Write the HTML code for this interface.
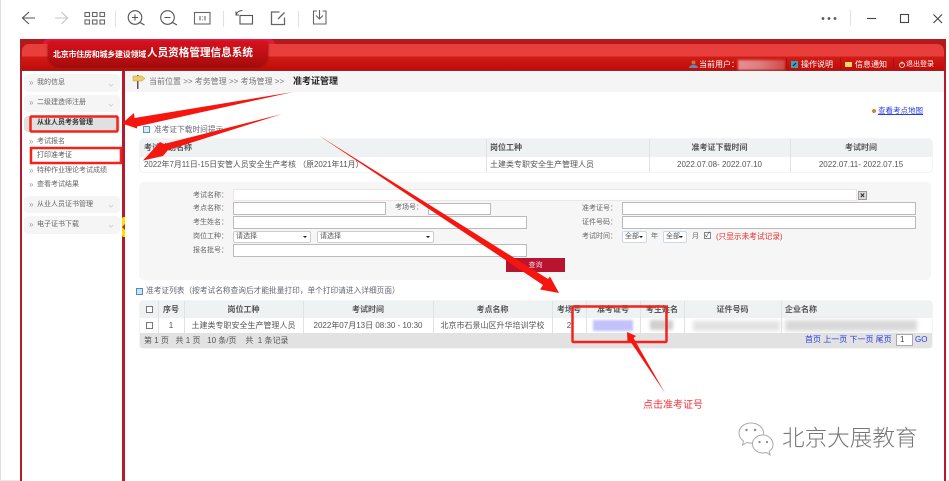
<!DOCTYPE html>
<html lang="zh-CN">
<head>
<meta charset="utf-8">
<title>准考证管理</title>
<style>
html,body{margin:0;padding:0;background:#fff}
body{width:949px;height:481px;position:relative;overflow:hidden;font-family:"Liberation Sans","Noto Sans CJK SC",sans-serif;color:#555}
.a{position:absolute}
.t{position:absolute;white-space:nowrap;font-size:8px;line-height:10px;color:#666;filter:blur(.25px)}
.s7{font-size:7px}
.side{position:absolute;left:24px;width:96px;background:#f5f5f5;border-radius:4px}
.inp{position:absolute;background:#fff;border:1px solid #bbb;box-sizing:border-box}
.sel{position:absolute;background:#fff;border:1px solid #ccc;border-radius:2px;box-sizing:border-box;font-size:7px;line-height:10px;color:#555;padding-left:2px}
.sel:after{content:"";position:absolute;right:3px;top:4px;border:2px solid transparent;border-top:2.5px solid #222}
.vl{position:absolute;width:1px;background:#dfe3e4}
.c{text-align:center}
.b{font-weight:bold;color:#555}
</style>
</head>
<body>
<!-- window strips -->
<div class="a" style="left:0;top:0;width:1px;height:481px;background:#dcdcdc"></div>
<div class="a" style="left:0;top:480px;width:949px;height:1px;background:#e8e8e8"></div>

<!-- toolbar -->
<svg class="a" style="left:0;top:0" width="949" height="36" viewBox="0 0 949 36" fill="none" stroke="#555" stroke-width="1.1">
<path d="M35 18H23M29 12l-6.500 6 6.500 6"/>
<path d="M55 18h12M61.500 12l6 6-6 6" stroke="#c4c4c4"/>
<g stroke="#666"><rect x="85" y="12.500" width="4.500" height="4"/><rect x="92.500" y="12.500" width="4.500" height="4"/><rect x="100" y="12.500" width="4.500" height="4"/><rect x="85" y="20" width="4.500" height="4"/><rect x="92.500" y="20" width="4.500" height="4"/><rect x="100" y="20" width="4.500" height="4"/></g>
<path d="M115.500 11v16M223.500 11v16M298.500 11v16M850.500 10v16" stroke="#e2e2e2"/>
<circle cx="135" cy="17.500" r="6.800"/><path d="M140 22.500l4.500 2.500M132 17.500h6M135 14.500v6"/>
<circle cx="167.500" cy="17.500" r="6.800"/><path d="M172.500 22.500l4.500 2.500M164.500 17.500h6"/>
<rect x="194.500" y="12.500" width="15.500" height="11.500" stroke="#666"/><path d="M200 16v4.500M205 16v4.500M202.500 16.500v.8M202.500 19.500v.8" stroke="#666"/>
<rect x="240" y="15.500" width="12.500" height="8.500" stroke="#555"/><path d="M236 15c1-3 3-4.500 6.500-4.500M236 11.500v3.500h3"/>
<path d="M284.500 17.500v7h-13v-12.500h8M278 19l6.500-6.500" stroke="#666" stroke-width="1.300"/>
<path d="M317 11h-3.500v13h12.500v-13h-3.500M319.500 10v9M316 15.500l3.500 3.500 3.500-3.500" stroke="#666"/>
<g fill="#555" stroke="none"><circle cx="823" cy="18.500" r="1.400"/><circle cx="829" cy="18.500" r="1.400"/><circle cx="835" cy="18.500" r="1.400"/></g>
<path d="M867 18.500h9" stroke="#444"/>
<rect x="900.500" y="14.500" width="8" height="8" stroke="#444"/>
<path d="M933.500 14.500l8.500 8.500M942 14.500l-8.500 8.500" stroke="#444"/>
</svg>

<!-- frame -->
<div class="a" style="left:20px;top:39px;width:926px;height:442px;background:#fff"></div>
<div class="a" style="left:20px;top:39px;width:2px;height:442px;background:#b51b2c"></div>
<div class="a" style="left:944px;top:39px;width:2px;height:442px;background:#b51b2c"></div>
<div class="a" style="left:122px;top:71px;width:3px;height:410px;background:#b51b2c"></div>
<div class="a" style="left:122px;top:217px;width:3px;height:20px;background:#f5e400;border-radius:2px 0 0 2px"></div>
<div class="a" style="left:122px;top:224px;border:3px solid transparent;border-right:3px solid #c22;border-left:0"></div>

<!-- header -->
<div class="a" style="left:20px;top:39px;width:926px;height:32px;background:#b41a1c"></div>
<div class="a" style="left:22px;top:44px;width:922px;height:27px;border-radius:7px 7px 0 0;background:linear-gradient(#e83e3c 0,#e83e3c 12px,#d01b16 13px,#c00a07 100%)"></div>
<div class="a" style="left:22px;top:70px;width:922px;height:1px;background:#8a2a2a"></div>
<div class="a" style="left:43px;top:39px;width:232px;height:5px;background:#e5173a;border-radius:6px 6px 0 0"></div>
<div class="a" style="left:48px;top:41px;width:220px;height:25px;background:linear-gradient(#d7111d,#a70c0c);border-radius:3px 3px 12px 12px;box-shadow:0 1px 2px #7a0d0d"></div>
<div class="t" style="left:53px;top:49px;font-size:8px;line-height:12px;color:#fff;letter-spacing:-.25px;font-weight:bold">北京市住房和城乡建设领域</div>
<div class="t" style="left:147px;top:46px;font-size:10.600px;line-height:15px;color:#fff;font-weight:bold">人员资格管理信息系统</div>

<!-- header right -->
<svg class="a" style="left:688px;top:60px" width="235" height="10" viewBox="0 0 235 10">
<circle cx="5.500" cy="2.500" r="2" fill="#c4793c"/><path d="M1 8c0-2 2-3 4.500-3s4.500 1 4.500 3z" fill="#5b8ac0"/>
<rect x="103" y="1" width="7" height="7" fill="#2fa9bd"/><path d="M105 6l3-3" stroke="#111" stroke-width="1.200"/>
<rect x="157" y="2" width="7" height="5" fill="#f1d66a"/>
<circle cx="214" cy="5" r="2.500" fill="none" stroke="#fff" stroke-width=".8"/><path d="M214 1.500v3" stroke="#fff" stroke-width=".8"/>
</svg>
<div class="t" style="left:699px;top:60px;color:#fff;font-size:8px">当前用户：</div>
<div class="a" style="left:738px;top:60px;width:47px;height:10px;background:linear-gradient(90deg,#e88f90,#dd7f80 45%,#cf4c4c);filter:blur(1px)"></div>
<div class="t" style="left:801px;top:60px;color:#fff;font-size:8px">操作说明</div>
<div class="t" style="left:855px;top:60px;color:#fff;font-size:8px">信息通知</div>
<div class="t" style="left:906px;top:60px;color:#fff;font-size:7px">退出登录</div>
<div class="a" style="left:786px;top:58px;width:1px;height:12px;background:#a81010"></div>
<div class="a" style="left:840px;top:58px;width:1px;height:12px;background:#a81010"></div>
<div class="a" style="left:893px;top:58px;width:1px;height:12px;background:#a81010"></div>

<!-- breadcrumb -->
<div class="a" style="left:125px;top:71px;width:819px;height:21px;background:#f5f5f5"></div>
<svg class="a" style="left:132px;top:74px" width="14" height="16" viewBox="0 0 14 16"><path d="M5 1h1.500v14H5z" fill="#555"/><path d="M1 2h9l3 2.500-3 2.500H1z" fill="#eccb6a" stroke="#b99b3d" stroke-width=".5"/></svg>
<div class="t" style="left:149px;top:77px;color:#777">当前位置 &gt;&gt; 考务管理 &gt;&gt; 考场管理 &gt;&gt;</div>
<div class="t" style="left:293px;top:76px;color:#222;font-size:9px;line-height:11px;font-weight:bold">准考证管理</div>
<div class="a" style="left:872px;top:109px;width:4px;height:4px;background:#d5813d;border-radius:50%"></div>
<div class="t" style="left:878px;top:106px;color:#2a3ee0;text-decoration:underline;font-size:7.500px">查看考点地图</div>

<!-- sidebar -->
<div class="side" style="top:74px;height:18px"></div>
<div class="t" style="left:29px;top:78px;color:#999">&raquo;</div><div class="t s7" style="left:37px;top:78px">我的信息</div>
<div class="side" style="top:95px;height:17px"></div>
<div class="t" style="left:29px;top:98px;color:#999">&raquo;</div><div class="t s7" style="left:37px;top:98px">二级建造师注册</div>
<div class="side" style="top:116px;height:16px;background:#e0e0e0"></div>
<div class="t s7" style="left:37px;top:118px;color:#333;font-weight:bold">从业人员考务管理</div>
<div class="t" style="left:29px;top:137px;color:#999">&raquo;</div><div class="t s7" style="left:37px;top:137px">考试报名</div>
<div class="t s7" style="left:37px;top:151px;color:#555">打印准考证</div>
<div class="t" style="left:29px;top:166px;color:#999">&raquo;</div><div class="t s7" style="left:37px;top:166px">特种作业理论考试成绩</div>
<div class="t" style="left:29px;top:180px;color:#999">&raquo;</div><div class="t s7" style="left:37px;top:180px">查看考试结果</div>
<div class="side" style="top:196px;height:17px"></div>
<div class="t" style="left:29px;top:200px;color:#999">&raquo;</div><div class="t s7" style="left:37px;top:200px">从业人员证书管理</div>
<div class="side" style="top:216px;height:18px"></div>
<div class="t" style="left:29px;top:220px;color:#999">&raquo;</div><div class="t s7" style="left:37px;top:220px">电子证书下载</div>
<svg class="a" style="left:108px;top:80px" width="8" height="150" viewBox="0 0 8 150" fill="none" stroke="#ccc" stroke-width=".8"><path d="M1 4l2 2 2-2M1 24l2 2 2-2M1 125l2 2 2-2M1 145l2 2 2-2"/></svg>

<!-- notice table -->
<div class="a" style="left:143px;top:126px;width:7px;height:7px;border:1px solid #5f93b8;background:#dbe9f3;box-sizing:border-box"></div>
<div class="t" style="left:154px;top:125px;color:#667;font-size:7.700px">准考证下载时间提示</div>
<div class="a" style="left:140px;top:139px;width:792px;height:33px;border-radius:3px;background:#fff;box-shadow:0 0 1px #bbb;overflow:hidden">
  <div class="a" style="left:0;top:0;width:792px;height:18px;background:#eef2f3"></div>
</div>
<div class="vl" style="left:486px;top:139px;height:33px"></div>
<div class="vl" style="left:649px;top:139px;height:33px"></div>
<div class="vl" style="left:790px;top:139px;height:33px"></div>
<div class="t b" style="left:144px;top:143px">考试计划名称</div>
<div class="t b" style="left:490px;top:143px">岗位工种</div>
<div class="t b c" style="left:649px;top:143px;width:141px">准考证下载时间</div>
<div class="t b c" style="left:790px;top:143px;width:142px">考试时间</div>
<div class="t" style="left:144px;top:160px;color:#555;font-size:7.900px">2022年7月11日-15日安管人员安全生产考核 （原2021年11月）</div>
<div class="t" style="left:490px;top:160px;color:#555">土建类专职安全生产管理人员</div>
<div class="t c" style="left:649px;top:160px;width:141px;color:#555">2022.07.08- 2022.07.10</div>
<div class="t c" style="left:790px;top:160px;width:142px;color:#555">2022.07.11- 2022.07.15</div>

<!-- form -->
<div class="a" style="left:139px;top:182px;width:792px;height:98px;background:#f6f6f6;border-radius:5px"></div>
<div class="t s7" style="left:193px;top:191px">考试名称：</div>
<div class="t s7" style="left:193px;top:204px">考点名称：</div>
<div class="t s7" style="left:193px;top:218px">考生姓名：</div>
<div class="t s7" style="left:193px;top:232px">岗位工种：</div>
<div class="t s7" style="left:193px;top:246px">报名批号：</div>
<div class="inp" style="left:233px;top:189px;width:624px;height:12px;border-color:#f0e4e4"></div>
<div class="a" style="left:858px;top:191px;width:9px;height:9px;background:#d8d8d8;border:1px solid #999;box-sizing:border-box;font-size:8px;line-height:7px;text-align:center;color:#111;font-weight:bold">×</div>
<div class="inp" style="left:233px;top:202px;width:153px;height:13px"></div>
<div class="t s7" style="left:395px;top:203px">考场号：</div>
<div class="inp" style="left:428px;top:203px;width:63px;height:12px"></div>
<div class="inp" style="left:233px;top:216px;width:294px;height:13px"></div>
<div class="sel" style="left:233px;top:231px;width:78px;height:12px">请选择</div>
<div class="sel" style="left:317px;top:231px;width:117px;height:12px">请选择</div>
<div class="inp" style="left:233px;top:244px;width:294px;height:13px"></div>
<div class="t s7" style="left:582px;top:204px">准考证号：</div>
<div class="t s7" style="left:582px;top:218px">证件号码：</div>
<div class="t s7" style="left:582px;top:232px">考试时间：</div>
<div class="inp" style="left:622px;top:202px;width:294px;height:13px"></div>
<div class="inp" style="left:622px;top:216px;width:294px;height:13px"></div>
<div class="sel" style="left:622px;top:231px;width:25px;height:12px;border-color:#cfd8e6">全部</div>
<div class="t s7" style="left:651px;top:232px">年</div>
<div class="sel" style="left:663px;top:231px;width:24px;height:12px;border-color:#cfd8e6">全部</div>
<div class="t s7" style="left:692px;top:232px">月</div>
<div class="a" style="left:704px;top:232px;width:7px;height:7px;border:1px solid #888;box-sizing:border-box;background:#fff;font-size:7px;line-height:5px;color:#333">✓</div>
<div class="t" style="left:716px;top:232px;color:#f02a2a;font-size:7.700px">(只显示未考试记录)</div>
<div class="a" style="left:506px;top:258px;width:59px;height:14px;background:#b8142f"></div>
<div class="t c" style="left:506px;top:261px;width:59px;color:#f3d9dc;font-size:7px">查询</div>

<!-- list -->
<div class="a" style="left:136px;top:288px;width:7px;height:7px;border:1px solid #4c8dbf;background:#cfe3f2;box-sizing:border-box"></div>
<div class="t" style="left:146px;top:286px;color:#667;font-size:7.700px">准考证列表（按考试名称查询后才能批量打印，单个打印请进入详细页面）</div>
<div class="a" style="left:140px;top:301px;width:792px;height:47px;background:#fff;border-radius:3px;box-shadow:0 0 1px #bbb;overflow:hidden">
  <div class="a" style="left:0;top:0;width:792px;height:17px;background:#eef2f3"></div>
  <div class="a" style="left:0;top:32px;width:792px;height:15px;background:#e2e2e2"></div>
</div>
<div class="vl" style="left:158px;top:301px;height:32px"></div>
<div class="vl" style="left:184px;top:301px;height:32px"></div>
<div class="vl" style="left:303px;top:301px;height:32px"></div>
<div class="vl" style="left:433px;top:301px;height:32px"></div>
<div class="vl" style="left:552px;top:301px;height:32px"></div>
<div class="vl" style="left:586px;top:301px;height:32px"></div>
<div class="vl" style="left:640px;top:301px;height:32px"></div>
<div class="vl" style="left:684px;top:301px;height:32px"></div>
<div class="vl" style="left:781px;top:301px;height:32px"></div>
<div class="a" style="left:146px;top:306px;width:7px;height:7px;border:1px solid #777;box-sizing:border-box;background:#fff"></div>
<div class="a" style="left:146px;top:322px;width:7px;height:7px;border:1px solid #777;box-sizing:border-box;background:#fff"></div>
<div class="t b c" style="left:158px;top:305px;width:26px">序号</div>
<div class="t b c" style="left:184px;top:305px;width:119px">岗位工种</div>
<div class="t b c" style="left:303px;top:305px;width:130px">考试时间</div>
<div class="t b c" style="left:433px;top:305px;width:119px">考点名称</div>
<div class="t b c" style="left:552px;top:305px;width:34px">考场号</div>
<div class="t b c" style="left:586px;top:305px;width:54px">准考证号</div>
<div class="t b c" style="left:640px;top:305px;width:44px">考生姓名</div>
<div class="t b c" style="left:684px;top:305px;width:97px">证件号码</div>
<div class="t" style="left:785px;top:305px;font-weight:bold;color:#555">企业名称</div>
<div class="t c" style="left:158px;top:321px;width:26px;color:#555">1</div>
<div class="t c" style="left:184px;top:321px;width:119px;color:#555">土建类专职安全生产管理人员</div>
<div class="t c" style="left:303px;top:321px;width:130px;color:#555">2022年07月13日 08:30 - 10:30</div>
<div class="t c" style="left:433px;top:321px;width:119px;color:#555">北京市石景山区升华培训学校</div>
<div class="t c" style="left:552px;top:321px;width:34px;color:#555">2</div>
<div class="a" style="left:593px;top:320px;width:40px;height:11px;background:#c4c2fb;filter:blur(1px)"></div>
<div class="a" style="left:650px;top:320px;width:23px;height:10px;background:#cfcfcf;filter:blur(1.500px)"></div>
<div class="a" style="left:693px;top:321px;width:87px;height:10px;background:#e2e2e2;filter:blur(2px)"></div>
<div class="a" style="left:785px;top:320px;width:132px;height:11px;background:#d8d8d8;filter:blur(2px)"></div>
<div class="t" style="left:144px;top:336px;color:#555">第 1 页&nbsp;&nbsp; 共 1 页&nbsp;&nbsp; 10 条/页&nbsp;&nbsp;&nbsp; 共&nbsp; 1 条记录</div>
<div class="t" style="left:805px;top:335px;color:#2a3ee0">首页 上一页 下一页 尾页</div>
<div class="a" style="left:896px;top:334px;width:17px;height:12px;background:#fff;border:1px solid #aaa;box-sizing:border-box;font-size:8px;line-height:10px;padding-left:3px;color:#444">1</div>
<div class="t" style="left:915px;top:335px;color:#2a3ee0">GO</div>

<!-- annotations -->
<svg class="a" style="left:0;top:0" width="949" height="481" viewBox="0 0 949 481">
<g fill="none" stroke="#f5221b">
<rect x="30.500" y="116.500" width="87" height="15" stroke-width="2.500" rx="1"/>
<rect x="31" y="148" width="90" height="15" stroke-width="2.500"/>
<rect x="572.500" y="306.500" width="94" height="35.500" stroke-width="2.500" rx="1"/>
</g>
<g fill="#f5170f">
<path d="M122 123.500L134 113l.5 5L293 92 137 126.500l0 2z"/>
<path d="M143 160.500L160 142l4 2L282 114 168 150l-5 6z"/>
<path d="M318 135L548 279l2-2.500L559 293l-19-3.500 3-4.500z"/>
<path d="M627 332l9 4-2.500 2L665 393 630 341l-2.500 1z"/>
</g>
</svg>
<div class="t" style="left:643px;top:400px;color:#f5303a;font-size:10px;line-height:12px">点击准考证号</div>

<!-- watermark -->
<svg class="a" style="left:736px;top:421px" width="42" height="36" viewBox="0 0 42 36" fill="#fff" stroke="#aaa" stroke-width="1">
<path d="M15 2C8 2 3 6.500 3 12c0 3.500 2 6.200 4.500 8l-1 4 4.500-2.500c1.500.4 3 .6 4.500.6 7 0 12-4.800 12-10.200S22 2 15 2z"/>
<path d="M27 14c-6 0-10.500 4-10.500 9S21 32 27 32c1.200 0 2.400-.2 3.500-.5l3.500 2.500-.8-3.500c2.300-1.700 3.800-4 3.800-7 0-5-4.500-9.500-9.500-9.500z"/>
<g fill="#888" stroke="none"><circle cx="10.500" cy="9" r="1.200"/><circle cx="19" cy="9" r="1.200"/><circle cx="23.500" cy="21" r="1.100"/><circle cx="31" cy="21" r="1.100"/></g>
</svg>
<div class="t" style="left:782px;top:425px;font-size:22.600px;line-height:28px;color:#777;font-weight:300">北京大展教育</div>
</body>
</html>
